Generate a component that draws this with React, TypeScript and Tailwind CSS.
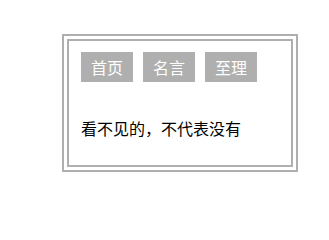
const tabs = ['首页', '名言', '至理']

export default function App() {
  return (
    <div className="w-[329px] h-[204px] bg-white pl-[62px] pt-[34px] font-['Noto_Sans_CJK_SC','Noto_Sans',sans-serif]">
      {/* double frame */}
      <div className="w-[236px] h-[138px] border-2 border-[#afafaf] p-[3px]">
        <div className="h-full border-2 border-[#afafaf] pl-[12px] pt-[11px]">
          <div className="flex gap-[10px]">
            {tabs.map((t) => (
              <div
                key={t}
                className="w-[52px] h-[30px] bg-[#afafaf] text-white text-[16px] flex items-center justify-center"
              >
                {t}
              </div>
            ))}
          </div>
          <p className="mt-[34px] text-[16px] leading-[24px] text-black">看不见的，不代表没有</p>
        </div>
      </div>
    </div>
  )
}
